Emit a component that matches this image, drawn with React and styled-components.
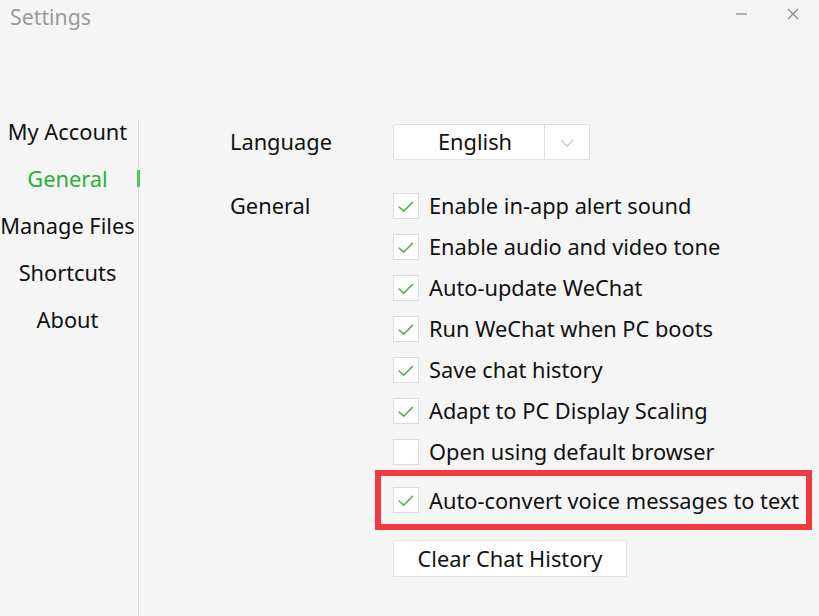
import styled, { createGlobalStyle } from "styled-components";

const GlobalStyle = createGlobalStyle`
  html, body {
    margin: 0;
    padding: 0;
    background: #f5f5f5;
  }
  body {
    font-family: "Noto Sans", "Open Sans", "Liberation Sans", sans-serif;
    color: #111;
  }
`;

const sections = ["My Account", "General", "Manage Files", "Shortcuts", "About"];

const options = [
  { label: "Enable in-app alert sound", on: true },
  { label: "Enable audio and video tone", on: true },
  { label: "Auto-update WeChat", on: true },
  { label: "Run WeChat when PC boots", on: true },
  { label: "Save chat history", on: true },
  { label: "Adapt to PC Display Scaling", on: true },
  { label: "Open using default browser", on: false },
];

const Check = ({ on }) => (
  <Box>
    {on && (
      <svg width="26" height="26" viewBox="0 0 26 26">
        <path
          d="M5.5 13 L10.5 17.5 L20 8"
          fill="none"
          stroke="#4caf50"
          strokeWidth="1.6"
          strokeLinecap="round"
          strokeLinejoin="round"
        />
      </svg>
    )}
  </Box>
);

const App = () => {
  return (
    <Window>
      <GlobalStyle />
      <TitleBar>
        <Title>Settings</Title>
        <Controls>
          <svg width="14" height="14" viewBox="0 0 14 14">
            <line x1="1" y1="7" x2="12" y2="7" stroke="#8a8a8a" strokeWidth="1.3" />
          </svg>
          <svg width="14" height="14" viewBox="0 0 14 14">
            <path d="M2 2 L12 12 M12 2 L2 12" stroke="#8a8a8a" strokeWidth="1.3" />
          </svg>
        </Controls>
      </TitleBar>

      <Body>
        <Sidebar>
          <NavList>
            {sections.map((s) => (
              <NavItem key={s} $active={s === "General"}>
                {s}
              </NavItem>
            ))}
          </NavList>
        </Sidebar>

        <Content>
          <Row>
            <Label>Language</Label>
            <Select>
              <SelectValue>English</SelectValue>
              <SelectArrow>
                <svg width="16" height="10" viewBox="0 0 16 10">
                  <path d="M2 2 L8 8 L14 2" fill="none" stroke="#c8c8c8" strokeWidth="1.3" />
                </svg>
              </SelectArrow>
            </Select>
          </Row>

          <Section>
            <Label>General</Label>
            <Options>
              {options.map((o) => (
                <Option key={o.label}>
                  <Check on={o.on} />
                  <span>{o.label}</span>
                </Option>
              ))}
              <Highlight>
                <Option>
                  <Check on />
                  <span>Auto-convert voice messages to text</span>
                </Option>
              </Highlight>
              <ClearButton>Clear Chat History</ClearButton>
            </Options>
          </Section>
        </Content>
      </Body>
    </Window>
  );
};

const Window = styled.div`
  width: 819px;
  height: 616px;
  overflow: hidden;
  background: #f5f5f5;
`;

const TitleBar = styled.div`
  height: 36px;
  display: flex;
  justify-content: space-between;
  align-items: flex-start;
`;

const Title = styled.div`
  font-size: 21.3px;
  color: #9a9a9a;
  padding: 3px 0 0 10px;
  line-height: 28px;
`;

const Controls = styled.div`
  display: flex;
  gap: 37px;
  padding: 7px 19px 0 0;
`;

const Body = styled.div`
  display: flex;
  height: 580px;
`;

//

const Sidebar = styled.div`
  width: 138px;
  margin-top: 84px;
  border-right: 1px solid #dcdcdc;
  flex-shrink: 0;
`;

const NavList = styled.div`
  margin-top: -12px;
  display: flex;
  flex-direction: column;
`;

const NavItem = styled.div`
  position: relative;
  height: 47px;
  line-height: 47px;
  text-align: center;
  padding-right: 3px;
  font-size: 21.8px;
  white-space: nowrap;
  color: ${(p) => (p.$active ? "#2aae3a" : "#111")};

  &::after {
    content: "";
    display: ${(p) => (p.$active ? "block" : "none")};
    position: absolute;
    right: -2px;
    top: 15px;
    width: 3px;
    height: 17px;
    background: #5cbf61;
  }
`;

//

const Content = styled.div`
  flex: 1;
  padding: 85px 0 0 91px;
  display: flex;
  flex-direction: column;
`;

const Row = styled.div`
  display: flex;
  align-items: center;
`;

const Section = styled.div`
  display: flex;
  margin-top: 23px;
`;

const Label = styled.div`
  width: 163px;
  flex-shrink: 0;
  font-size: 21.8px;
  line-height: 41px;
`;

const Select = styled.div`
  display: flex;
  width: 195px;
  height: 34px;
  background: #fff;
  border: 1px solid #e0e0e0;
`;

const SelectValue = styled.div`
  box-sizing: border-box;
  width: 151px;
  padding-left: 12px;
  border-right: 1px solid #e0e0e0;
  text-align: center;
  font-size: 21.8px;
  line-height: 34px;
`;

const SelectArrow = styled.div`
  flex: 1;
  display: flex;
  align-items: center;
  justify-content: center;
  padding-top: 2px;
`;

const Options = styled.div`
  display: flex;
  flex-direction: column;
  align-items: flex-start;
`;

const Option = styled.div`
  display: flex;
  align-items: center;
  gap: 10px;
  height: 41px;
  font-size: 21.8px;
  white-space: nowrap;
`;

const Box = styled.div`
  box-sizing: border-box;
  width: 26px;
  height: 26px;
  background: #fff;
  border: 1px solid #dcdcdc;
  display: flex;
`;

const Highlight = styled.div`
  margin: -2px 0 0 -18px;
  width: 413px;
  height: 48px;
  padding-left: 12px;
  border: 6px solid #f03c3f;
  display: flex;
  align-items: center;
`;

const ClearButton = styled.button`
  margin-top: 10px;
  width: 234px;
  height: 37px;
  background: #fff;
  border: 1px solid #e4e4e4;
  font-family: inherit;
  font-size: 21.8px;
  color: #111;
  padding: 0;
`;

export default App;
